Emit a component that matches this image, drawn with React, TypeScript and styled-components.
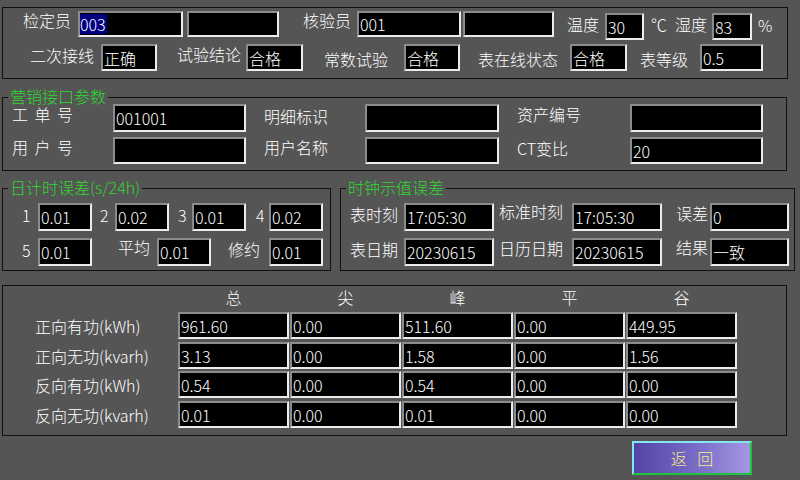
import React from 'react';
import styled, { createGlobalStyle } from 'styled-components';

const FONT = `"Noto Sans CJK SC", "Noto Sans", sans-serif`;

const Global = createGlobalStyle`
  html, body { margin: 0; padding: 0; background: #555555; }
  body { font-family: ${FONT}; font-weight: 300; color: #ffffff; }
  #root { width: 800px; height: 480px; overflow: hidden; }
`;

const Screen = styled.div`
  width: 800px;
  height: 480px;
  box-sizing: border-box;
  padding: 7px 0 0 2px;
  display: flex;
  flex-direction: column;
  font-size: 16px;
  line-height: 18px;
`;

const Panel = styled.div<{ $w: number; $h: number; $mt?: number; $ml?: number; $pt?: number }>`
  position: relative;
  flex: none;
  box-sizing: border-box;
  width: ${(p) => p.$w}px;
  height: ${(p) => p.$h}px;
  margin-top: ${(p) => p.$mt ?? 0}px;
  margin-left: ${(p) => p.$ml ?? 0}px;
  padding-top: ${(p) => p.$pt ?? 0}px;
  border: 1px solid #111111;
  display: flex;
  flex-direction: column;
`;

const Title = styled.span`
  position: absolute;
  top: -11px;
  left: 5px;
  padding: 0 2px;
  background: #555555;
  color: #2fd82f;
  font-size: 16px;
  line-height: 18px;
  white-space: nowrap;
`;

const Row = styled.div<{ $h: number; $mb?: number }>`
  display: flex;
  align-items: flex-start;
  flex: none;
  height: ${(p) => p.$h}px;
  margin-bottom: ${(p) => p.$mb ?? 0}px;
`;

const Label = styled.span<{ $w: number; $ml?: number; $mt?: number; $ws?: number }>`
  display: block;
  flex: none;
  width: ${(p) => p.$w}px;
  margin-left: ${(p) => p.$ml ?? 0}px;
  margin-top: ${(p) => p.$mt ?? 0}px;
  white-space: pre;
  word-spacing: ${(p) => p.$ws ?? 0}px;
  color: #ffffff;
  font-size: 16px;
  line-height: 18px;
`;

const Field = styled.div<{ $w: number; $h?: number; $ml?: number; $mt?: number }>`
  flex: none;
  box-sizing: border-box;
  width: ${(p) => p.$w}px;
  height: ${(p) => p.$h ?? 27}px;
  margin-left: ${(p) => p.$ml ?? 0}px;
  margin-top: ${(p) => p.$mt ?? 0}px;
  background: #000000;
  border: 2px solid;
  border-color: #8c8c8c #ececec #ececec #8c8c8c;
  display: flex;
  align-items: center;
  padding-left: 1px;
  color: #ffffff;
  font-size: 16px;
  line-height: 18px;
  white-space: nowrap;
  overflow: hidden;
`;

const Selected = styled.span`
  display: inline-block;
  margin-left: -1px;
  background: #000080;
  line-height: 20px;
  height: 20px;
  padding-right: 1px;
`;

const PanelRow = styled.div`
  display: flex;
  flex: none;
  margin-top: 17px;
`;

const Table = styled.div`
  display: grid;
  grid-template-columns: 174px repeat(5, 111px);
  grid-template-rows: 26px 30px 29px 30px 29px;
  column-gap: 1px;
`;

const HeadCell = styled.div`
  padding-top: 2px;
  text-align: center;
  font-size: 16px;
  line-height: 18px;
`;

const RowLabel = styled.div`
  height: 27px;
  padding-left: 32px;
  display: flex;
  align-items: center;
  white-space: nowrap;
`;

const Cell = styled(Field)`
  width: auto;
  align-self: start;
`;

const ButtonBar = styled.div`
  display: flex;
  justify-content: flex-end;
  padding-right: 48px;
  margin-top: 5px;
`;

const BackButton = styled.button`
  width: 120px;
  height: 34px;
  box-sizing: border-box;
  padding: 0;
  border: 2px solid;
  border-color: #86e4f6 #1ec43a #1ec43a #86e4f6;
  background: linear-gradient(90deg, #5444a6 0%, #7a6cc8 55%, #a497e2 100%);
  color: #f6ee7a;
  font-family: ${FONT};
  font-weight: 300;
  font-size: 16px;
  line-height: 18px;
  word-spacing: 7px;
  white-space: pre;
  cursor: pointer;
`;

const tableHead = ['总', '尖', '峰', '平', '谷'];
const tableRows: string[][] = [
  ['正向有功(kWh)', '961.60', '0.00', '511.60', '0.00', '449.95'],
  ['正向无功(kvarh)', '3.13', '0.00', '1.58', '0.00', '1.56'],
  ['反向有功(kWh)', '0.54', '0.00', '0.54', '0.00', '0.00'],
  ['反向无功(kvarh)', '0.01', '0.00', '0.01', '0.00', '0.00'],
];

export default function App() {
  return (
    <>
      <Global />
      <Screen>
        <Panel $w={786} $h={72} $pt={3}>
          <Row $h={33}>
            <Label $ml={20} $w={55}>检定员</Label>
            <Field $w={105} $h={26}>
              <Selected>003</Selected>
            </Field>
            <Field $w={92} $h={26} $ml={4} />
            <Label $ml={24} $w={54}>核验员</Label>
            <Field $w={104} $h={26}>001</Field>
            <Field $w={91} $h={26} $ml={2} />
            <Label $ml={13} $w={38} $mt={4}>温度</Label>
            <Field $w={39} $mt={2}>30</Field>
            <Label $ml={7} $w={24} $mt={4}>℃</Label>
            <Label $w={37} $mt={4}>湿度</Label>
            <Field $w={40} $mt={2}>83</Field>
            <Label $ml={6} $w={20} $mt={5}>%</Label>
          </Row>
          <Row $h={27}>
            <Label $ml={27} $w={71} $mt={2}>二次接线</Label>
            <Field $w={56}>正确</Field>
            <Label $ml={20} $w={69} $mt={1}>试验结论</Label>
            <Field $w={57}>合格</Field>
            <Label $ml={21} $w={80} $mt={6}>常数试验</Label>
            <Field $w={56}>合格</Field>
            <Label $ml={18} $w={92} $mt={6}>表在线状态</Label>
            <Field $w={57}>合格</Field>
            <Label $ml={13} $w={60} $mt={6}>表等级</Label>
            <Field $w={63}>0.5</Field>
          </Row>
        </Panel>

        <Panel $w={785} $h={74} $mt={18} $pt={6}>
          <Title>营销接口参数</Title>
          <Row $h={28} $mb={5}>
            <Label $ml={9} $w={101} $mt={1} $ws={3}>工 单 号</Label>
            <Field $w={133} $h={28}>001001</Field>
            <Label $ml={18} $w={101} $mt={3}>明细标识</Label>
            <Field $w={134} $h={28} />
            <Label $ml={18} $w={113} $mt={1}>资产编号</Label>
            <Field $w={133} $h={28} />
          </Row>
          <Row $h={27}>
            <Label $ml={9} $w={101} $mt={1} $ws={3}>用 户 号</Label>
            <Field $w={133} />
            <Label $ml={18} $w={101} $mt={1}>用户名称</Label>
            <Field $w={134} />
            <Label $ml={18} $w={113} $mt={2}>CT变比</Label>
            <Field $w={133}>20</Field>
          </Row>
        </Panel>

        <PanelRow>
          <Panel $w={329} $h={83} $pt={14}>
            <Title>日计时误差(s/24h)</Title>
            <Row $h={28} $mb={7}>
              <Label $ml={19} $w={16} $mt={3}>1</Label>
              <Field $w={54} $h={28}>0.01</Field>
              <Label $ml={8} $w={15} $mt={3}>2</Label>
              <Field $w={54} $h={28}>0.02</Field>
              <Label $ml={9} $w={14} $mt={3}>3</Label>
              <Field $w={54} $h={28}>0.01</Field>
              <Label $ml={10} $w={13} $mt={3}>4</Label>
              <Field $w={54} $h={28}>0.02</Field>
            </Row>
            <Row $h={28}>
              <Label $ml={19} $w={16} $mt={3}>5</Label>
              <Field $w={54} $h={28}>0.01</Field>
              <Label $ml={26} $w={39} $mt={0}>平均</Label>
              <Field $w={54} $h={28}>0.01</Field>
              <Label $ml={17} $w={41} $mt={2}>修约</Label>
              <Field $w={54} $h={28}>0.01</Field>
            </Row>
          </Panel>

          <Panel $w={455} $h={83} $ml={9} $pt={14}>
            <Title>时钟示值误差</Title>
            <Row $h={28} $mb={7}>
              <Label $ml={9} $w={54} $mt={2}>表时刻</Label>
              <Field $w={90} $h={28}>17:05:30</Field>
              <Label $ml={5} $w={73} $mt={-1}>标准时刻</Label>
              <Field $w={90} $h={28}>17:05:30</Field>
              <Label $ml={14} $w={34} $mt={1}>误差</Label>
              <Field $w={79} $h={28}>0</Field>
            </Row>
            <Row $h={28}>
              <Label $ml={9} $w={54} $mt={2}>表日期</Label>
              <Field $w={90} $h={28}>20230615</Field>
              <Label $ml={5} $w={73} $mt={1}>日历日期</Label>
              <Field $w={90} $h={28}>20230615</Field>
              <Label $ml={14} $w={34} $mt={0}>结果</Label>
              <Field $w={79} $h={28}>一致</Field>
            </Row>
          </Panel>
        </PanelRow>

        <Panel $w={785} $h={151} $mt={14}>
          <Table>
            <div />
            {tableHead.map((h) => (
              <HeadCell key={h}>{h}</HeadCell>
            ))}
            {tableRows.map((r) => (
              <React.Fragment key={r[0]}>
                <RowLabel>{r[0]}</RowLabel>
                {r.slice(1).map((v, i) => (
                  <Cell key={i} $w={111}>
                    {v}
                  </Cell>
                ))}
              </React.Fragment>
            ))}
          </Table>
        </Panel>

        <ButtonBar>
          <BackButton type="button">返 回</BackButton>
        </ButtonBar>
      </Screen>
    </>
  );
}
